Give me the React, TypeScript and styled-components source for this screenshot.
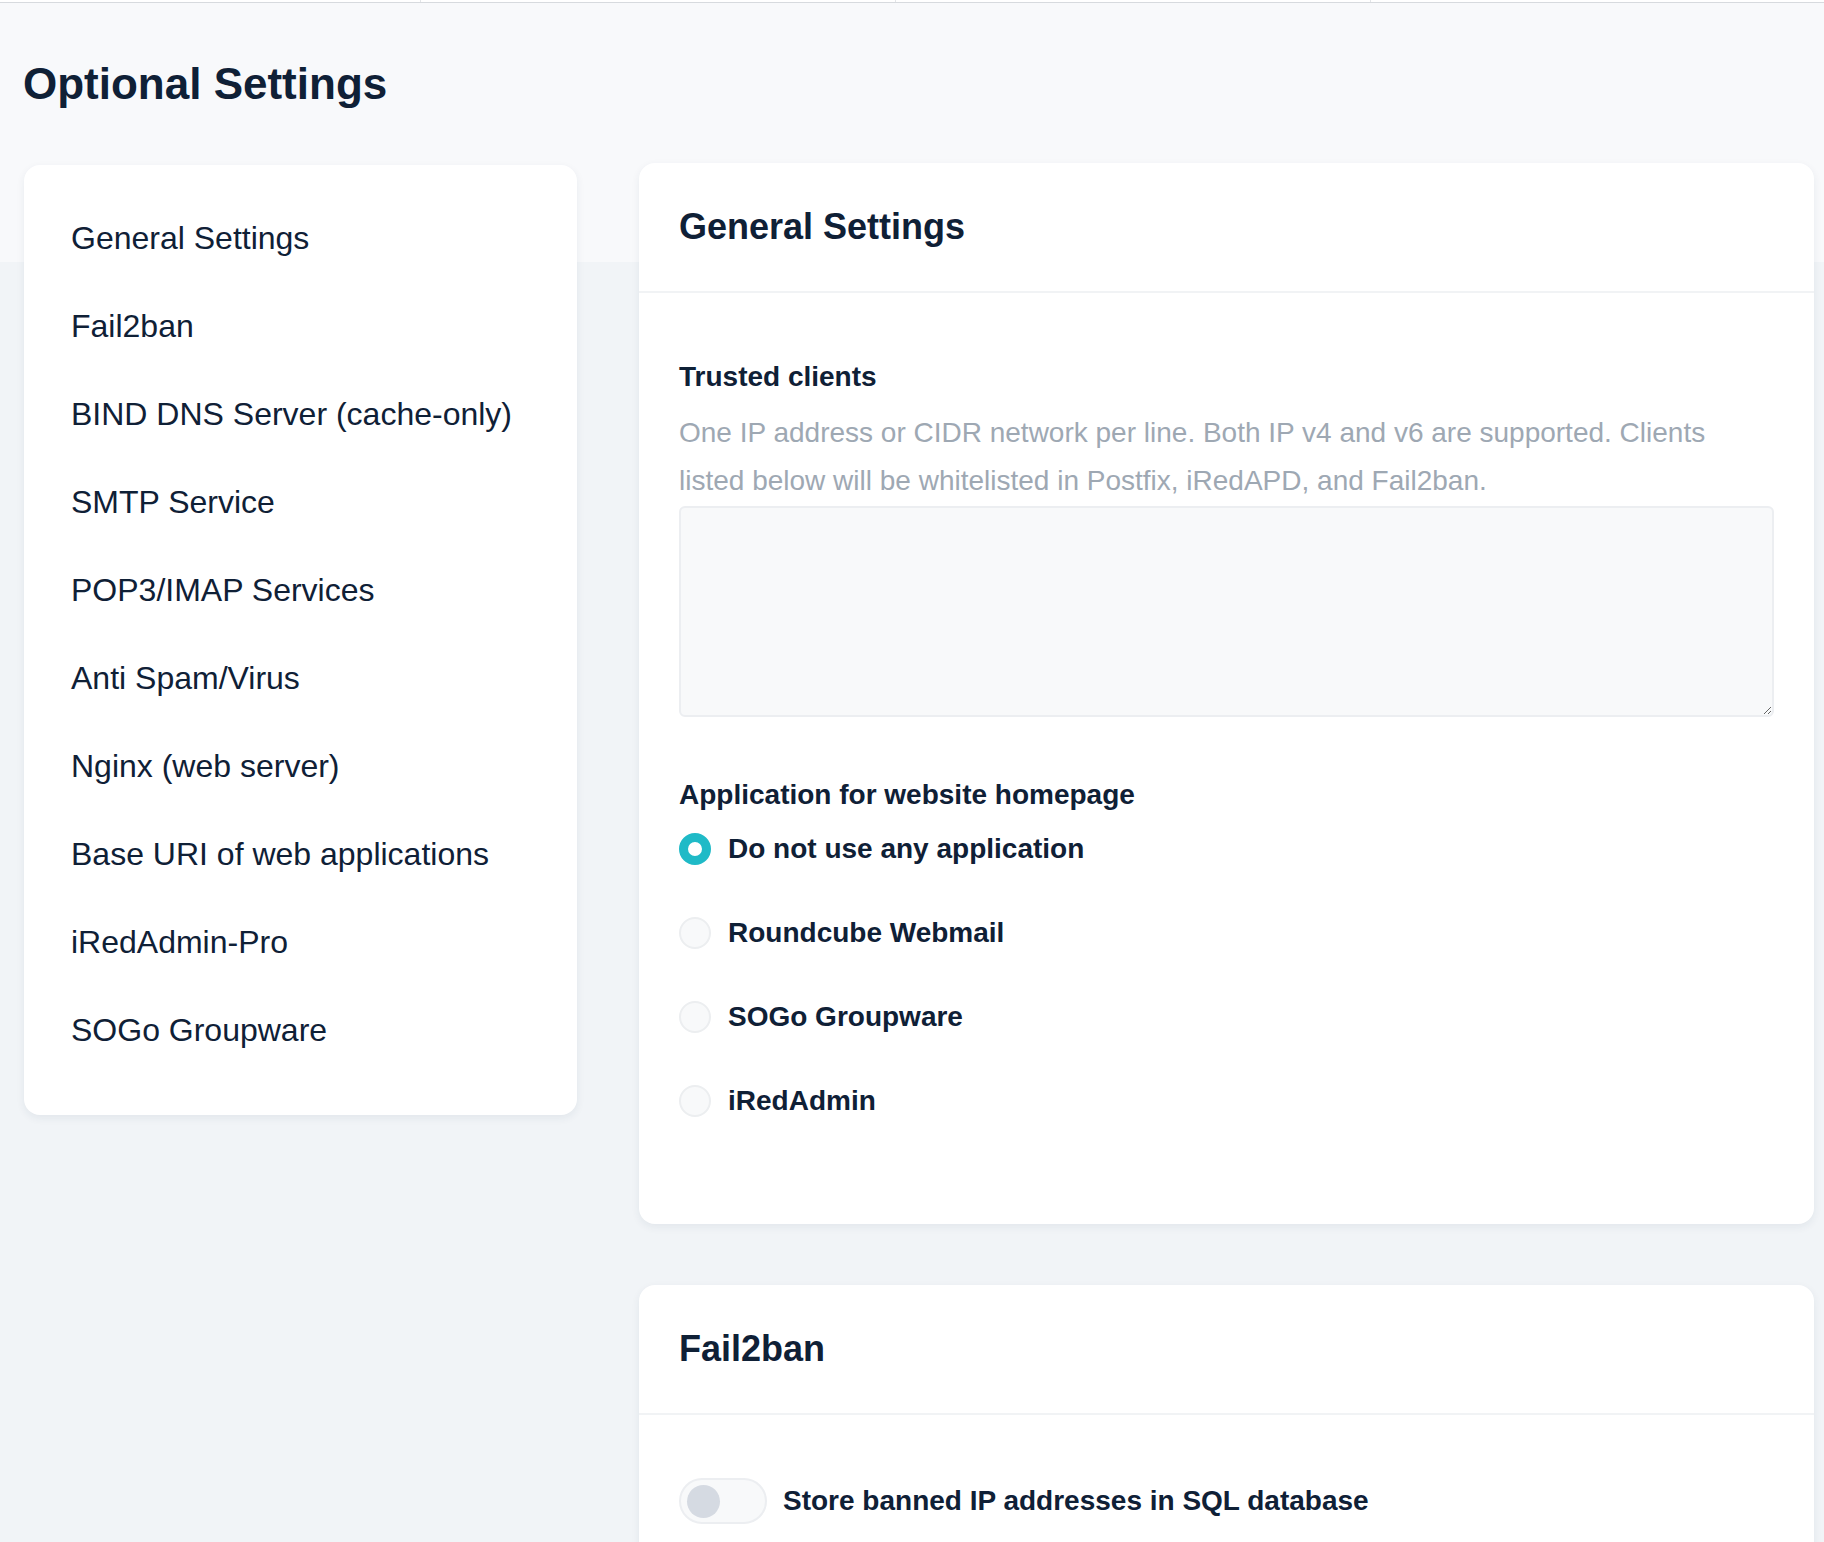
import React from "react";
import styled, { createGlobalStyle } from "styled-components";

const GlobalStyle = createGlobalStyle`
  html, body {
    margin: 0;
    padding: 0;
  }
  body {
    font-family: "Liberation Sans", Arial, Helvetica, sans-serif;
    color: #0f2036;
    background: #f1f4f7;
  }
  * { box-sizing: border-box; }
`;

const Page = styled.div`
  min-height: 100vh;
  background: linear-gradient(to bottom, #f8f9fb 0, #f8f9fb 262px, #f1f4f7 262px);
  padding-bottom: 40px;
`;

const TopStrip = styled.div`
  display: grid;
  grid-template-columns: 421px 475px 475px 1fr;
  height: 3px;
  border-bottom: 1px solid #d7dade;
  background: #ffffff;
`;

const StripCell = styled.div`
  border-right: 1px solid #e3e5e8;
  &:last-child { border-right: none; }
`;

const PageTitle = styled.h1`
  margin: 55px 0 0 23px;
  font-size: 44px;
  line-height: 52px;
  font-weight: 700;
  color: #0f2036;
`;

const Layout = styled.div`
  display: grid;
  grid-template-columns: 553px 1fr;
  column-gap: 62px;
  align-items: start;
  margin-top: 53px;
  padding: 0 10px 0 24px;
`;

const NavCard = styled.nav`
  margin-top: 2px;
  background: #ffffff;
  border-radius: 16px;
  box-shadow: 0 3px 8px rgba(30, 50, 80, 0.07);
  padding: 29px 0 41px;
  display: flex;
  flex-direction: column;
`;

const NavItem = styled.a`
  display: block;
  padding: 20px 47px;
  font-size: 32px;
  line-height: 48px;
  color: #0f2036;
  text-decoration: none;
  cursor: pointer;
`;

const Column = styled.div`
  display: flex;
  flex-direction: column;
  gap: 61px;
`;

const Card = styled.section`
  background: #ffffff;
  border-radius: 16px;
  box-shadow: 0 3px 8px rgba(30, 50, 80, 0.07);
`;

const CardHeader = styled.header`
  padding: 40px;
  border-bottom: 2px solid #f1f3f5;
`;

const CardTitle = styled.h2`
  margin: 0;
  font-size: 36px;
  line-height: 48px;
  font-weight: 700;
  color: #0f2036;
`;

const CardBody = styled.div<{ $pb: number }>`
  padding: 63px 40px ${(p) => p.$pb}px;
`;

const FormGroup = styled.div<{ $mt?: number }>`
  margin-top: ${(p) => p.$mt ?? 0}px;
`;

const FieldLabel = styled.div<{ $mb: number }>`
  font-size: 28px;
  line-height: 42px;
  font-weight: 700;
  color: #0f2036;
  margin-bottom: ${(p) => p.$mb}px;
`;

const HelpText = styled.p`
  margin: 0;
  font-size: 28px;
  line-height: 48px;
  color: #9ea8b3;
`;

const TextArea = styled.textarea`
  display: block;
  width: 100%;
  height: 211px;
  margin-top: 1px;
  background: #f8f9fa;
  border: 2px solid #eceef1;
  border-radius: 6px;
  font-family: inherit;
  font-size: 28px;
  padding: 12px 16px;
  outline: none;
`;

const RadioList = styled.div`
  display: flex;
  flex-direction: column;
  gap: 36px;
`;

const RadioRow = styled.label`
  display: flex;
  align-items: center;
  gap: 17px;
  height: 48px;
  cursor: pointer;
`;

const RadioDot = styled.span<{ $checked?: boolean }>`
  flex: none;
  width: 32px;
  height: 32px;
  border-radius: 50%;
  background: ${(p) => (p.$checked ? "#ffffff" : "#f8f9fa")};
  border: ${(p) => (p.$checked ? "9px solid #1fbac7" : "2px solid #eceef0")};
`;

const OptionText = styled.span`
  font-size: 28px;
  line-height: 42px;
  font-weight: 700;
  color: #0f2036;
`;

const ToggleRow = styled.label`
  display: flex;
  align-items: center;
  gap: 16px;
  cursor: pointer;
`;

const Toggle = styled.span`
  flex: none;
  width: 88px;
  height: 46px;
  border-radius: 23px;
  background: #f8f9fa;
  border: 2px solid #eceef1;
  display: flex;
  align-items: center;
  padding-left: 6px;
`;

const Knob = styled.span`
  width: 33px;
  height: 33px;
  border-radius: 50%;
  background: #d5dae2;
`;

const navItems = [
  "General Settings",
  "Fail2ban",
  "BIND DNS Server (cache-only)",
  "SMTP Service",
  "POP3/IMAP Services",
  "Anti Spam/Virus",
  "Nginx (web server)",
  "Base URI of web applications",
  "iRedAdmin-Pro",
  "SOGo Groupware",
];

const homepageOptions = [
  "Do not use any application",
  "Roundcube Webmail",
  "SOGo Groupware",
  "iRedAdmin",
];

export default function App() {
  return (
    <>
      <GlobalStyle />
      <Page>
        <TopStrip>
          <StripCell />
          <StripCell />
          <StripCell />
          <StripCell />
        </TopStrip>
        <PageTitle>Optional Settings</PageTitle>
        <Layout>
          <NavCard>
            {navItems.map((item) => (
              <NavItem key={item}>{item}</NavItem>
            ))}
          </NavCard>
          <Column>
            <Card>
              <CardHeader>
                <CardTitle>General Settings</CardTitle>
              </CardHeader>
              <CardBody $pb={99}>
                <FormGroup>
                  <FieldLabel $mb={11}>Trusted clients</FieldLabel>
                  <HelpText>
                    One IP address or CIDR network per line. Both IP v4 and v6 are supported. Clients
                    listed below will be whitelisted in Postfix, iRedAPD, and Fail2ban.
                  </HelpText>
                  <TextArea />
                </FormGroup>
                <FormGroup $mt={57}>
                  <FieldLabel $mb={9}>Application for website homepage</FieldLabel>
                  <RadioList>
                    {homepageOptions.map((opt, i) => (
                      <RadioRow key={opt}>
                        <RadioDot $checked={i === 0} />
                        <OptionText>{opt}</OptionText>
                      </RadioRow>
                    ))}
                  </RadioList>
                </FormGroup>
              </CardBody>
            </Card>
            <Card>
              <CardHeader>
                <CardTitle>Fail2ban</CardTitle>
              </CardHeader>
              <CardBody $pb={60}>
                <ToggleRow>
                  <Toggle>
                    <Knob />
                  </Toggle>
                  <OptionText>Store banned IP addresses in SQL database</OptionText>
                </ToggleRow>
              </CardBody>
            </Card>
          </Column>
        </Layout>
      </Page>
    </>
  );
}
